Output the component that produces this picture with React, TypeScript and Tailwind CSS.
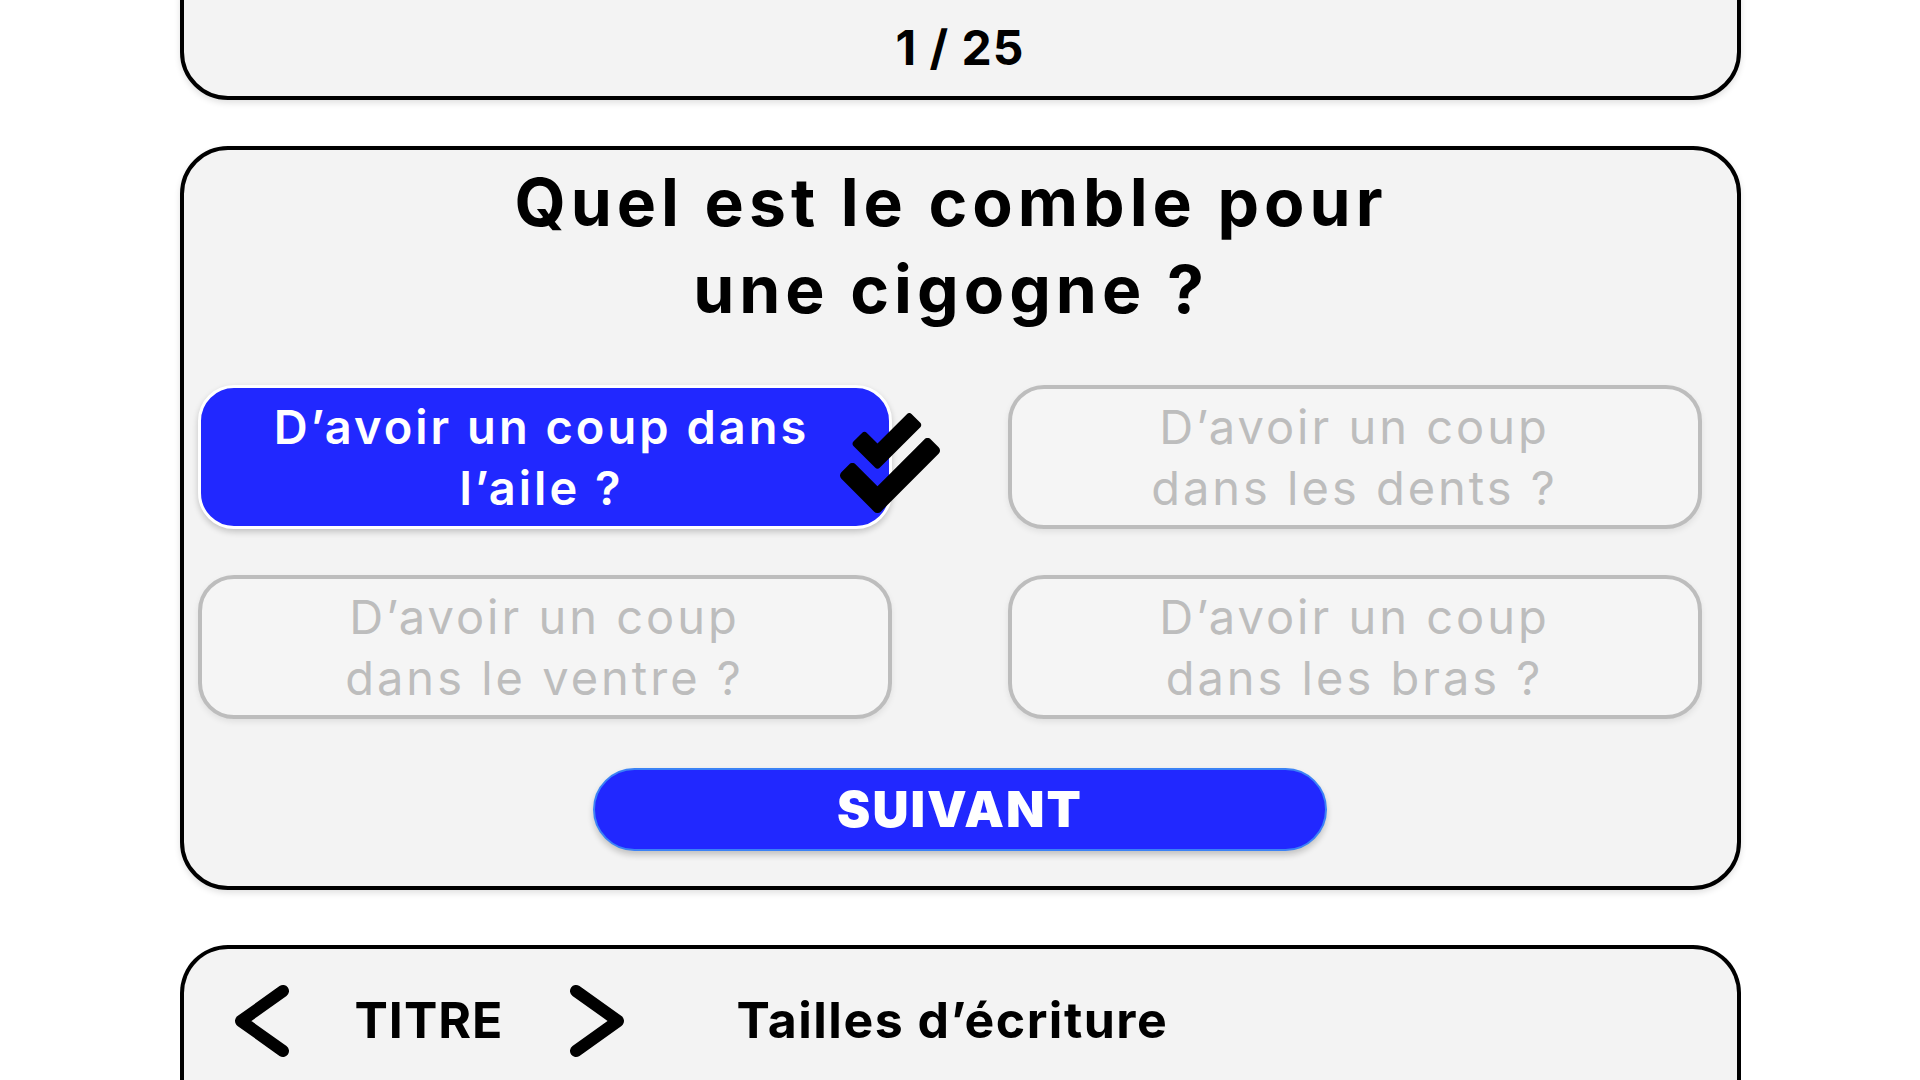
import { FaCheckDouble } from 'react-icons/fa';

const answers = [
  { text: ['D’avoir un coup dans', 'l’aile ?'], selected: true },
  { text: ['D’avoir un coup', 'dans les dents ?'], selected: false },
  { text: ['D’avoir un coup', 'dans le ventre ?'], selected: false },
  { text: ['D’avoir un coup', 'dans les bras ?'], selected: false },
];

function Chevron({ dir }: { dir: 'left' | 'right' }) {
  const pts = dir === 'left' ? '50,7 8,37 50,67' : '8,7 50,37 8,67';
  return (
    <svg width="58" height="74" viewBox="0 0 58 74" className="shrink-0">
      <polyline
        points={pts}
        fill="none"
        stroke="#000"
        strokeWidth="12"
        strokeLinecap="round"
        strokeLinejoin="round"
      />
    </svg>
  );
}

function AnswerButton({ text, selected }: { text: string[]; selected: boolean }) {
  if (selected) {
    return (
      <div className="relative h-[144px]">
        <div className="flex h-full items-center justify-center rounded-[36px] border-[3px] border-white bg-[#2128ff] pr-[6px] text-center text-[47px] font-semibold leading-[61px] tracking-[3px] text-white shadow-[0_3px_6px_rgba(0,0,0,0.2)]">
          <div>
            {text[0]}
            <br />
            {text[1]}
          </div>
        </div>
        <FaCheckDouble className="absolute left-[642px] top-[28px] h-[100px] w-[100px] text-black" />
      </div>
    );
  }
  return (
    <div className="flex h-[144px] items-center justify-center rounded-[36px] border-4 border-[#bdbdbd] bg-[#f5f5f5] text-center text-[47px] font-normal leading-[61px] tracking-[3px] text-[#bdbdbd] shadow-[0_3px_6px_rgba(0,0,0,0.08)]">
      <div>
        {text[0]}
        <br />
        {text[1]}
      </div>
    </div>
  );
}

export default function App() {
  return (
    <div className="h-screen w-full overflow-hidden bg-white font-['Inter',sans-serif] text-black">
      <div className="mx-auto flex w-[1561px] flex-col">
        {/* compteur */}
        <div className="-mt-[50px] flex h-[150px] items-end justify-center rounded-[48px] border-4 border-black bg-[#f3f3f3] pb-[23px] shadow-[0_3px_6px_rgba(0,0,0,0.12)]">
          <span className="text-[48px] font-bold leading-[50px] tracking-[1px]">1 / 25</span>
        </div>

        {/* question */}
        <div className="mt-[46px] flex flex-col rounded-[48px] border-4 border-black bg-[#f3f3f3] pb-[35px] pt-[9px] shadow-[0_3px_6px_rgba(0,0,0,0.12)]">
          <h1 className="pr-[18px] text-center text-[66px] font-bold leading-[87px] tracking-[5px]">
            Quel est le comble pour
            <br />
            une cigogne ?
          </h1>

          <div className="ml-[14px] mt-[52px] grid w-[1504px] grid-cols-2 gap-x-[116px] gap-y-[46px]">
            {answers.map((a, i) => (
              <AnswerButton key={i} text={a.text} selected={a.selected} />
            ))}
          </div>

          <div className="mt-[49px] flex justify-center">
            <button className="flex h-[83px] w-[734px] items-center justify-center rounded-full border-2 border-[#3b82f6] bg-[#2128ff] text-[50px] font-black tracking-[2px] text-white shadow-[0_4px_6px_rgba(0,0,0,0.2)]">
              SUIVANT
            </button>
          </div>
        </div>

        {/* réglages */}
        <div className="mt-[55px] h-[200px] rounded-t-[48px] border-4 border-b-0 border-black bg-[#f3f3f3] pl-[49px] pt-[34px]">
          <div className="flex items-center">
            <Chevron dir="left" />
            <span className="ml-[64px] text-[50px] font-bold tracking-[1px]">TITRE</span>
            <span className="ml-[64px]">
              <Chevron dir="right" />
            </span>
            <span className="ml-[111px] text-[50px] font-bold tracking-[1.5px]">Tailles d’écriture</span>
          </div>
        </div>
      </div>
    </div>
  );
}
